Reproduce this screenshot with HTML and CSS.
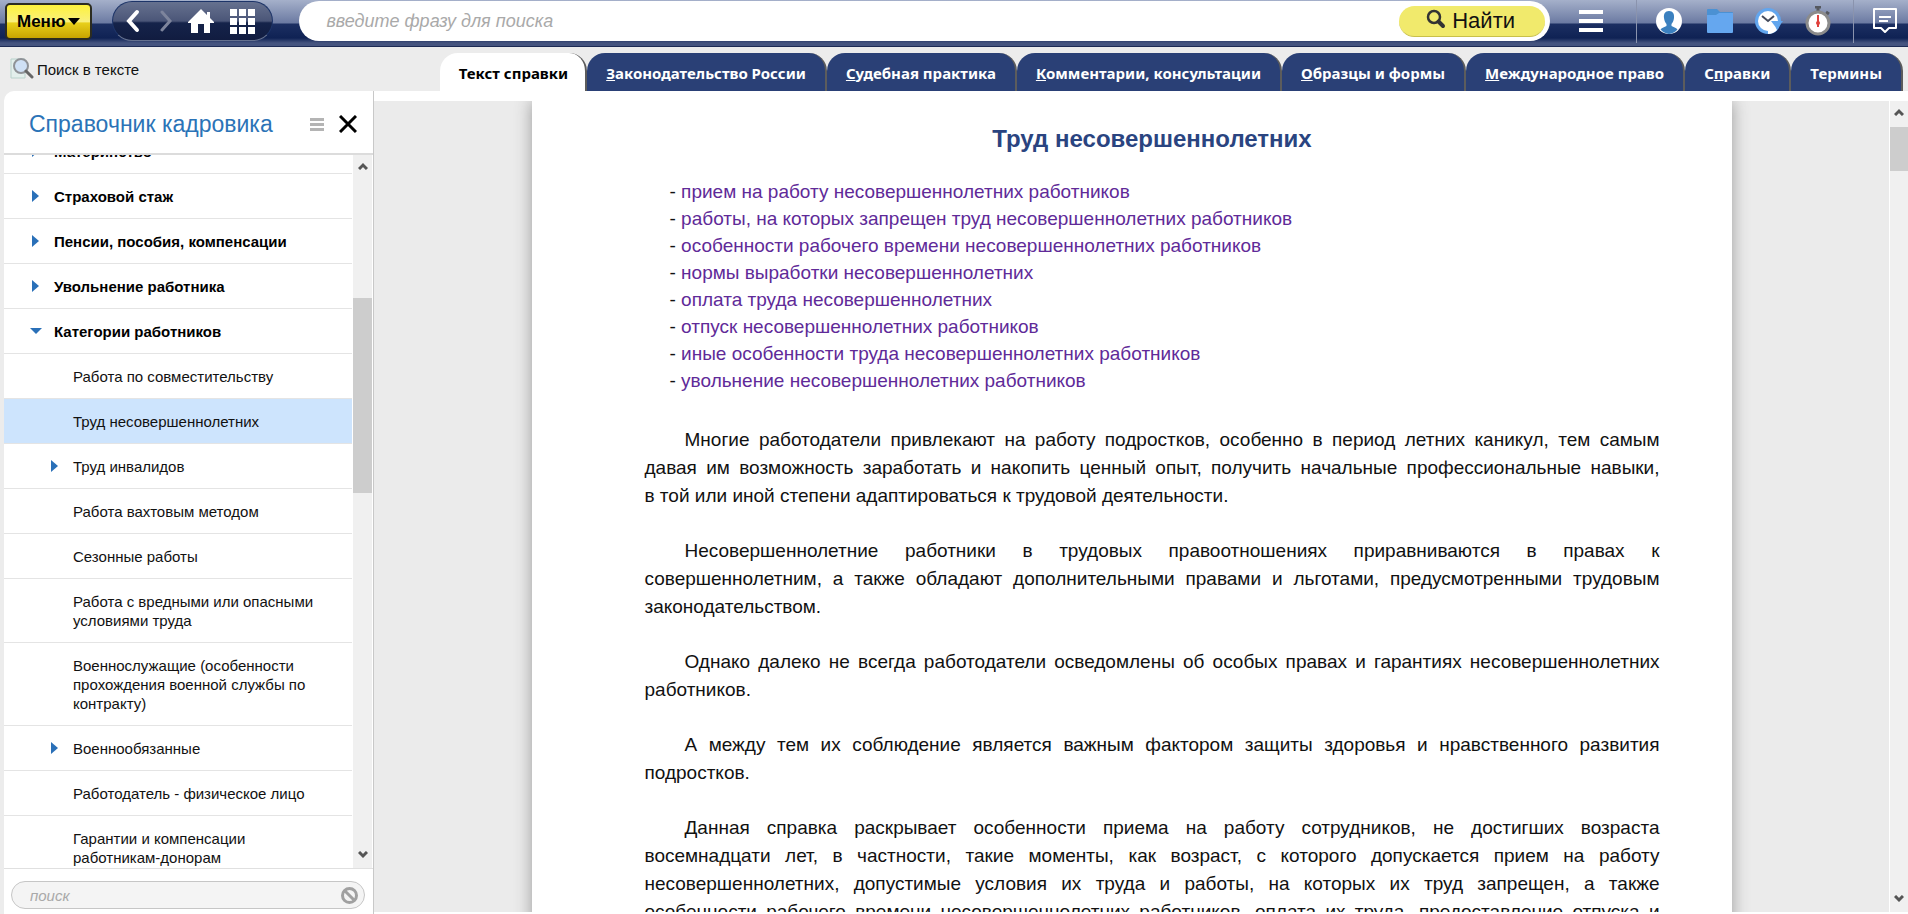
FILE: index.html
```
<!DOCTYPE html>
<html lang="ru">
<head>
<meta charset="utf-8">
<title>Справочник кадровика</title>
<link rel="stylesheet" href="styles.css">
</head>
<body>
<header class="topbar">
  <button class="menu-button" type="button">Меню<svg width="12" height="7" viewBox="0 0 12 7"><path d="M0 0h12L6 7z"/></svg></button>
  <nav class="nav-pill" aria-label="Навигация">
    <button class="icon-button" type="button" aria-label="Назад"><svg width="16" height="24" viewBox="0 0 16 24"><path d="M12 3L4 12l8 9" fill="none" stroke="#fff" stroke-width="4" stroke-linecap="round"/></svg></button>
    <button class="icon-button" type="button" aria-label="Вперёд"><svg width="16" height="24" viewBox="0 0 16 24"><path d="M6 3l8 9-8 9" fill="none" stroke="#7d849c" stroke-width="3" stroke-linecap="round"/></svg></button>
    <button class="icon-button" type="button" aria-label="Домой"><svg width="28" height="26" viewBox="0 0 28 26"><path d="M14 1L1 14v1h3v10h7v-9h6v9h6V15h4v-1l-4-4V4h-3v3z" fill="#fff"/></svg></button>
    <button class="icon-button" type="button" aria-label="Приложения"><svg width="25" height="25" viewBox="0 0 25 25"><path fill="#fff" d="M0 0h7v7H0zM9 0h7v7H9zM18 0h7v7h-7zM0 9h7v7H0zM9 9h7v7H9zM18 9h7v7h-7zM0 18h7v7H0zM9 18h7v7H9zM18 18h7v7h-7z"/></svg></button>
  </nav>
  <form class="search">
    <input class="search-input" type="text" aria-label="Поиск" placeholder="введите фразу для поиска">
    <button class="search-button" type="button"><svg width="20" height="24" viewBox="0 0 20 24"><circle cx="8" cy="8" r="6" fill="none" stroke="#333" stroke-width="2.500"/><path d="M12.500 12.500L17 17" stroke="#333" stroke-width="4" stroke-linecap="round"/></svg>Найти</button>
  </form>
  <div class="tools">
    <button class="icon-button burger" type="button" aria-label="Список"><svg width="24" height="22" viewBox="0 0 24 22"><path fill="#fff" d="M0 0h24v4H0zM0 9h24v4H0zM0 18h24v4H0z"/></svg></button>
    <div class="tool-group">
      <button class="icon-button" type="button" aria-label="Профиль"><svg width="28" height="28" viewBox="0 0 28 28"><circle cx="14" cy="14" r="13" fill="#fff"/><path d="M14 4c-4 0-5.500 3-5 7 .3 3 1.500 5 2.500 6v2c-2 1-4.500 1.500-6 3.500A13 13 0 0 0 14 27a13 13 0 0 0 8.500-4.500c-1.500-2-4-2.500-6-3.500v-2c1-1 2.200-3 2.500-6 .5-4-1-7-5-7z" fill="#3b80bf"/></svg></button>
      <button class="icon-button folder" type="button" aria-label="Папки"><svg width="26" height="24" viewBox="0 0 26 24"><path d="M0 1q0-1 1-1h9l3 3h12q1 0 1 1v4H0z" fill="#4b91d3"/><path d="M0 6h9l3-2h14v19q0 1-1 1H1q-1 0-1-1z" fill="#65a7ef"/></svg></button>
      <button class="icon-button" type="button" aria-label="История"><svg width="30" height="28" viewBox="0 0 30 28"><circle cx="14" cy="14" r="13" fill="#62a6ee"/><circle cx="14" cy="14" r="10" fill="#fff"/><path d="M14 24v3a13 13 0 0 0 9-4l-2-4z" fill="#fff"/><path d="M17 14h12l-6 8z" fill="#62a6ee"/><path d="M8 9l6 5 6-5" fill="none" stroke="#444b5c" stroke-width="2"/></svg></button>
      <button class="icon-button" type="button" aria-label="Таймер"><svg width="26" height="30" viewBox="0 0 26 30"><path d="M10 1h6M13 2v4M21 6l3 2" stroke="#55585f" stroke-width="3"/><circle cx="13" cy="17" r="11" fill="#fff" stroke="#8b8b8b" stroke-width="3"/><path d="M13 9v12" stroke="#e0403c" stroke-width="2"/><circle cx="13" cy="17" r="2" fill="#e0403c"/></svg></button>
    </div>
    <div class="tool-last">
      <button class="icon-button" type="button" aria-label="Чат"><svg width="26" height="26" viewBox="0 0 26 26"><path d="M2 1h22v19h-7l-4 4-4-4H2z" fill="none" stroke="#fff" stroke-width="2" stroke-linejoin="round"/><path d="M7 9h12M7 13h9" stroke="#fff" stroke-width="2"/></svg></button>
    </div>
  </div>
</header>

<div class="subbar">
  <button class="text-search" type="button"><svg width="24" height="22" viewBox="0 0 24 22"><path d="M1 1h14v19H1z" fill="#e3efec" stroke="#b9d2cc"/><circle cx="11" cy="8" r="7" fill="#cfe0f5" stroke="#8f9297" stroke-width="2"/><path d="M16 13l6 6" stroke="#666" stroke-width="3" stroke-linecap="round"/></svg>Поиск в тексте</button>
  <nav class="tabs">
    <a class="tab tab-active" href="#">Текст справки</a>
    <a class="tab" href="#"><u>З</u>аконодательство России</a>
    <a class="tab" href="#"><u>С</u>удебная практика</a>
    <a class="tab" href="#"><u>К</u>омментарии, консультации</a>
    <a class="tab" href="#"><u>О</u>бразцы и формы</a>
    <a class="tab" href="#"><u>М</u>еждународное право</a>
    <a class="tab" href="#">С<u>п</u>равки</a>
    <a class="tab" href="#">Термины</a>
  </nav>
</div>

<div class="workspace">
  <aside class="panel">
    <div class="panel-head">
      <h2 class="panel-title">Справочник кадровика</h2>
      <button class="icon-button" type="button" aria-label="Вид"><svg width="14" height="13" viewBox="0 0 14 13"><path fill="#b4b4b4" d="M0 0h14v3H0zM0 5h14v3H0zM0 10h14v3H0z"/></svg></button>
      <button class="icon-button" type="button" aria-label="Закрыть"><svg width="18" height="18" viewBox="0 0 18 18"><path d="M1 1l16 16M17 1L1 17" stroke="#000" stroke-width="3"/></svg></button>
    </div>
    <div class="panel-body">
      <ul class="tree">
        <li class="node node-top"><i class="arrow"></i>Материнство</li>
        <li class="node node-top"><i class="arrow"></i>Страховой стаж</li>
        <li class="node node-top"><i class="arrow"></i>Пенсии, пособия, компенсации</li>
        <li class="node node-top"><i class="arrow"></i>Увольнение работника</li>
        <li class="node node-top"><i class="arrow arrow-open"></i>Категории работников</li>
        <li class="node">Работа по совместительству</li>
        <li class="node node-selected">Труд несовершеннолетних</li>
        <li class="node"><i class="arrow"></i>Труд инвалидов</li>
        <li class="node">Работа вахтовым методом</li>
        <li class="node">Сезонные работы</li>
        <li class="node">Работа с вредными или опасными условиями труда</li>
        <li class="node">Военнослужащие (особенности прохождения военной службы по контракту)</li>
        <li class="node"><i class="arrow"></i>Военнообязанные</li>
        <li class="node">Работодатель - физическое лицо</li>
        <li class="node">Гарантии и компенсации работникам-донорам</li>
      </ul>
      <div class="scrollbar">
        <svg class="scroll-arrow" width="10" height="8" viewBox="0 0 10 8"><path d="M1 7l4-4 4 4" fill="none" stroke="#555" stroke-width="3"/></svg>
        <div class="track"><div class="thumb thumb-tree"></div></div>
        <svg class="scroll-arrow" width="10" height="8" viewBox="0 0 10 8"><path d="M1 1l4 4 4-4" fill="none" stroke="#555" stroke-width="3"/></svg>
      </div>
    </div>
    <div class="panel-search">
      <div class="filter">
        <input class="filter-input" type="text" aria-label="Поиск в справочнике" placeholder="поиск">
        <button class="icon-button" type="button" aria-label="Очистить"><svg width="19" height="19" viewBox="0 0 19 19"><circle cx="9.500" cy="9.500" r="7" fill="none" stroke="#a0a0a0" stroke-width="3"/><path d="M5 5l9 9" stroke="#a0a0a0" stroke-width="3"/></svg></button>
      </div>
    </div>
  </aside>
  <main class="viewer">
    <div class="canvas">
      <article class="page">
        <h1 class="page-title">Труд несовершеннолетних</h1>
        <ul class="toc">
          <li>- <a href="#">прием на работу несовершеннолетних работников</a></li>
          <li>- <a href="#">работы, на которых запрещен труд несовершеннолетних работников</a></li>
          <li>- <a href="#">особенности рабочего времени несовершеннолетних работников</a></li>
          <li>- <a href="#">нормы выработки несовершеннолетних</a></li>
          <li>- <a href="#">оплата труда несовершеннолетних</a></li>
          <li>- <a href="#">отпуск несовершеннолетних работников</a></li>
          <li>- <a href="#">иные особенности труда несовершеннолетних работников</a></li>
          <li>- <a href="#">увольнение несовершеннолетних работников</a></li>
        </ul>
        <p>Многие работодатели привлекают на работу подростков, особенно в период летних каникул, тем самым давая&nbsp;им возможность заработать и накопить ценный опыт, получить начальные профессиональные навыки, в&nbsp;той&nbsp;или иной степени адаптироваться к трудовой деятельности.</p>
        <p>Несовершеннолетние работники в трудовых правоотношениях приравниваются в правах к совершеннолетним, а также обладают дополнительными правами и льготами, предусмотренными трудовым законодательством.</p>
        <p>Однако далеко не всегда работодатели осведомлены об особых правах и гарантиях несовершеннолетних работников.</p>
        <p>А между тем их соблюдение является важным фактором защиты здоровья и нравственного развития подростков.</p>
        <p>Данная справка раскрывает особенности приема на работу сотрудников, не достигших возраста восемнадцати лет, в частности, такие моменты, как возраст, с которого допускается прием на работу несовершеннолетних, допустимые условия их труда и работы, на которых их труд запрещен, а также особенности рабочего времени несовершеннолетних работников, оплата их труда, предоставление отпуска и увольнение.</p>
      </article>
    </div>
    <div class="scrollbar scrollbar-page">
      <svg class="scroll-arrow" width="10" height="8" viewBox="0 0 10 8"><path d="M1 7l4-4 4 4" fill="none" stroke="#555" stroke-width="3"/></svg>
      <div class="track"><div class="thumb thumb-page"></div></div>
      <svg class="scroll-arrow" width="10" height="8" viewBox="0 0 10 8"><path d="M1 1l4 4 4-4" fill="none" stroke="#555" stroke-width="3"/></svg>
    </div>
  </main>
</div>
</body>
</html>
```
FILE: styles.css
```
* { box-sizing: border-box; }

body {
  margin: 0;
  height: 100vh;
  display: flex;
  flex-direction: column;
  overflow: hidden;
  background: #ececec;
  color: #111;
  font: 15px/19px "Liberation Sans", Arial, sans-serif;
}

button, input { font: inherit; color: inherit; }

.icon-button {
  display: flex;
  padding: 0;
  border: 0;
  background: none;
}

/* Top bar */
.topbar {
  flex: none;
  display: flex;
  align-items: center;
  height: 47px;
  padding: 0 10px 4px 5px;
  border-bottom: 1px solid #1d2b55;
  background: linear-gradient(#a5b0ca, #6b7aa2 23px, #1c2f62 24px, #0f2254 38px, #45547f 43px, #45547f);
}

.menu-button {
  display: flex;
  align-items: center;
  gap: 3px;
  height: 37px;
  padding: 0 10px 0 10px;
  border: 2px solid #2c2c20;
  border-radius: 5px;
  background: linear-gradient(#fdf23c, #f9f07c 50%, #e8cf1a 55%, #c8a400);
  color: #000;
  font-weight: bold;
  font-size: 17px;
}

.nav-pill {
  display: flex;
  align-items: center;
  gap: 15px;
  height: 40px;
  margin-left: 20px;
  padding: 0 17px 0 12px;
  border: 1px solid #1d3468;
  border-bottom-color: #65718f;
  border-radius: 20px;
  background: linear-gradient(#66718f, #4b5678 50%, #15234a 55%, #111c40);
}

.search {
  flex: 1;
  display: flex;
  align-items: center;
  height: 40px;
  margin-left: 26px;
  padding: 0 5px 0 25px;
  border-radius: 20px;
  background: #fff;
}

.search-input {
  flex: 1;
  min-width: 0;
  border: 0;
  outline: 0;
  background: none;
  font-size: 18px;
  font-style: italic;
}

.search-input::placeholder, .filter-input::placeholder { color: #a9a9a9; opacity: 1; }

.search-button {
  display: flex;
  align-items: center;
  gap: 6px;
  height: 31px;
  padding: 0 30px 0 27px;
  border: 0;
  border-bottom: 1px solid #c9c04a;
  border-radius: 16px;
  background: #f1ea6c;
  color: #111;
  font-size: 22px;
}

.tools { display: flex; align-items: center; height: 43px; }
.burger { margin: 0 33px 0 29px; }

.tool-group {
  display: flex;
  align-items: center;
  gap: 21px;
  height: 43px;
  padding: 0 22px 0 18px;
  border-left: 1px solid #8a93ad;
  border-right: 1px solid #8a93ad;
}

.folder { margin-left: 3px; }
.tool-last { padding-left: 18px; }

/* Tabs */
.subbar {
  flex: none;
  display: flex;
  justify-content: space-between;
  height: 44px;
  padding: 6px 5px 0 10px;
}

.text-search {
  display: flex;
  align-items: center;
  gap: 3px;
  height: 32px;
  padding: 0;
  border: 0;
  background: none;
}

.tabs { display: flex; }

.tab {
  padding: 11px 19px 0;
  border-right: 2px solid #5c5c5c;
  border-radius: 18px 18px 0 0;
  background: #2a4076;
  color: #fff;
  font: bold 15px/19px "Noto Sans", Tahoma, sans-serif;
  text-decoration: none;
  white-space: nowrap;
}

.tab-active { padding-right: 17px; background: #fff; color: #000; }

/* Layout under the tabs */
.workspace { flex: 1; min-height: 0; display: flex; background: #ececec; }

.panel {
  flex: none;
  display: flex;
  flex-direction: column;
  width: 370px;
  margin-left: 4px;
  border-right: 1px solid #c8c8c8;
  border-top-left-radius: 10px;
  background: #fff;
}

.panel-head {
  flex: none;
  display: flex;
  align-items: center;
  gap: 15px;
  height: 64px;
  padding: 4px 16px 0 25px;
  border-bottom: 2px solid #dcdcdc;
}

.panel-title {
  flex: 1;
  margin: 0;
  color: #2b73b7;
  font-weight: normal;
  font-size: 23px;
  line-height: 28px;
  white-space: nowrap;
}

.panel-body { flex: 1; min-height: 0; display: flex; gap: 1px; overflow: hidden; }

/* The tree is scrolled part of the way through its first row */
.tree { flex: 1; margin: -26px 0 0; padding: 0; list-style: none; }

.node {
  position: relative;
  padding: 13px 20px 12px 69px;
  border-bottom: 1px solid #e4e4e4;
}

.node-top { padding-left: 50px; color: #000; font-weight: bold; }
.node-selected { background: #cde4fd; }

.arrow {
  position: absolute;
  left: 47px;
  top: 16px;
  border: solid transparent;
  border-width: 6px 0 6px 7px;
  border-left-color: #2a70b8;
}

.node-top .arrow { left: 28px; }
.node-top .arrow-open { left: 26px; top: 19px; border-width: 6px 6px 0; border-color: #2a70b8 transparent transparent; }

.panel-search {
  flex: none;
  height: 46px;
  padding: 12px 8px 0 7px;
  border-top: 1px solid #e0e0e0;
}

.filter {
  display: flex;
  align-items: center;
  height: 28px;
  padding: 0 5px 0 16px;
  border: 1px solid #c6c6c6;
  border-radius: 14px;
  background: #f4f4f4;
}

.filter-input {
  flex: 1;
  min-width: 0;
  border: 0;
  outline: 0;
  background: none;
  font-style: italic;
}

.scrollbar {
  flex: none;
  display: flex;
  flex-direction: column;
  width: 20px;
  border-right: 1px solid #fff;
  background: #f0f0f0;
}

.scrollbar-page { width: 19px; border-right: 0; border-left: 1px solid #fff; }

.scroll-arrow { flex: none; margin: 9px auto; }
.scrollbar .scroll-arrow:first-child { margin-top: 7px; margin-bottom: 11px; }
.track { flex: 1; }
.thumb { background: #cdcdcd; }
.thumb-tree { height: 195px; margin-top: 117px; }
.thumb-page { height: 44px; }

/* Document */
.viewer {
  flex: 1;
  min-width: 0;
  display: flex;
  border-top: 10px solid #fff;
  border-bottom: 2px solid #fff;
}

.canvas { flex: 1; min-width: 0; overflow: hidden; background: #ebebeb; }

.page {
  max-width: 1200px;
  min-height: 100%;
  margin: 0 auto;
  padding: 22px 72px 0 113px;
  background: #fff;
  box-shadow: 0 0 16px #999;
  font-size: 19px;
  line-height: 28px;
}

.page-title {
  margin: 0 0 23px;
  color: #2a4480;
  font-size: 24px;
  line-height: 32px;
  text-align: center;
}

.toc { margin: 0 0 32px; padding: 0 0 0 25px; line-height: 27px; list-style: none; }
.toc a { color: #602a98; text-decoration: none; }

.page p { margin: 0 0 27px; text-align: justify; text-indent: 40px; }
```
